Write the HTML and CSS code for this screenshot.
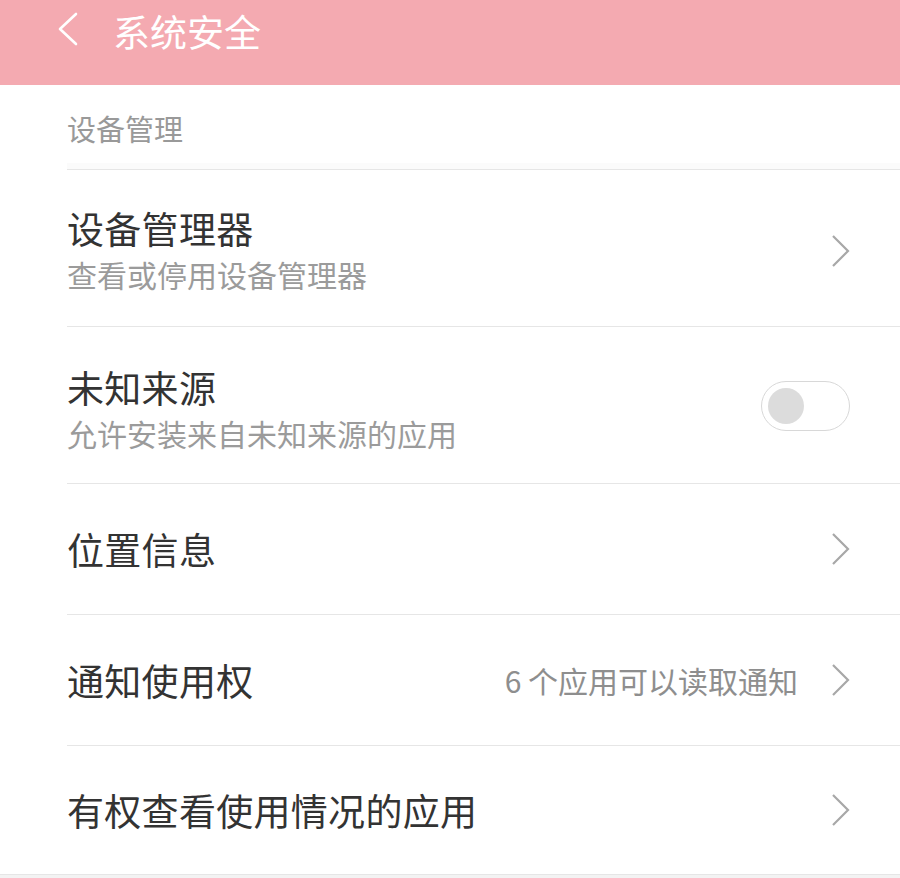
FILE: index.html
```html
<!DOCTYPE html>
<html lang="zh-CN">
<head>
<meta charset="utf-8">
<title>系统安全</title>
<link rel="stylesheet" href="styles.css">
</head>
<body>
<div class="page">
  <header class="appbar">
    <svg class="back" width="22" height="34" viewBox="0 0 22 34"><polyline points="19,2 3,17 19,32" fill="none" stroke="#ffffff" stroke-width="2.6" stroke-linecap="round" stroke-linejoin="round"/></svg>
    <h1 class="title">系统安全</h1>
  </header>
  <main class="content">
    <div class="section-head">设备管理</div>
    <div class="list">
      <div class="row row-two row-a">
        <div class="texts">
          <div class="row-title">设备管理器</div>
          <div class="row-sub">查看或停用设备管理器</div>
        </div>
        <svg class="chev" width="20" height="34" viewBox="0 0 20 34"><polyline points="2,2 17,17 2,32" fill="none" stroke="#a8a8a8" stroke-width="2.2"/></svg>
      </div>
      <div class="row row-two row-b">
        <div class="texts">
          <div class="row-title">未知来源</div>
          <div class="row-sub">允许安装来自未知来源的应用</div>
        </div>
        <div class="toggle"><div class="knob"></div></div>
      </div>
      <div class="row row-one">
        <div class="row-title">位置信息</div>
        <svg class="chev" width="20" height="34" viewBox="0 0 20 34"><polyline points="2,2 17,17 2,32" fill="none" stroke="#a8a8a8" stroke-width="2.2"/></svg>
      </div>
      <div class="row row-one">
        <div class="row-title">通知使用权</div>
        <div class="right">
          <span class="value">6 个应用可以读取通知</span>
          <svg class="chev" width="20" height="34" viewBox="0 0 20 34"><polyline points="2,2 17,17 2,32" fill="none" stroke="#a8a8a8" stroke-width="2.2"/></svg>
        </div>
      </div>
      <div class="row row-one row-last">
        <div class="row-title">有权查看使用情况的应用</div>
        <svg class="chev" width="20" height="34" viewBox="0 0 20 34"><polyline points="2,2 17,17 2,32" fill="none" stroke="#a8a8a8" stroke-width="2.2"/></svg>
      </div>
    </div>
  </main>
</div>
</body>
</html>
```
FILE: styles.css
```css
html, body {
  margin: 0;
  padding: 0;
}
body {
  background: #f3f3f3;
  font-family: "Noto Sans CJK SC", "Noto Sans", sans-serif;
}
.page {
  width: 900px;
  background: #ffffff;
}
.appbar {
  height: 85px;
  background: #f4aab1;
  display: flex;
  align-items: flex-start;
  box-sizing: border-box;
}
.back {
  margin-left: 57px;
  margin-top: 12px;
  display: block;
}
.title {
  margin: 0 0 0 34px;
  font-size: 37px;
  font-weight: 400;
  color: #ffffff;
  line-height: 62px;
  letter-spacing: 0;
}
.content {
  border-bottom: 1px solid #e6e6e6;
}
.section-head {
  margin-left: 67px;
  padding-top: 23px;
  padding-bottom: 21px;
  line-height: 40px;
  font-size: 29px;
  color: #999999;
  border-bottom: 1px solid #e6e6e6;
  background: linear-gradient(to bottom, #ffffff 0, #ffffff 78px, #fbfbfb 78px, #fbfbfb 84px);
}
.list {
  margin-left: 67px;
}
.row {
  display: flex;
  align-items: center;
  justify-content: space-between;
  padding-right: 49px;
  border-bottom: 1px solid #e6e6e6;
}
.row-a {
  padding-top: 35px;
  padding-bottom: 29px;
}
.row-b {
  padding-top: 37px;
  padding-bottom: 27px;
}
.row-one {
  height: 130px;
}
.row-one.row-last {
  height: 128px;
  border-bottom: none;
}
.row-title {
  font-size: 37px;
  line-height: 46px;
  color: #333333;
  letter-spacing: 0.3px;
}
.row-sub {
  font-size: 30px;
  line-height: 46px;
  color: #9b9b9b;
}
.right {
  display: flex;
  align-items: center;
  gap: 33px;
}
.value {
  font-size: 30px;
  color: #8e8e8e;
  line-height: 46px;
}
.chev {
  display: block;
}
.toggle {
  width: 81px;
  height: 48px;
  border: 1.5px solid #d8d8d8;
  border-radius: 26px;
  display: flex;
  align-items: center;
  padding-left: 6px;
  box-sizing: content-box;
  margin-right: 1px;
  margin-top: -8px;
}
.knob {
  width: 36px;
  height: 36px;
  border-radius: 50%;
  background: #dcdcdc;
}
```
